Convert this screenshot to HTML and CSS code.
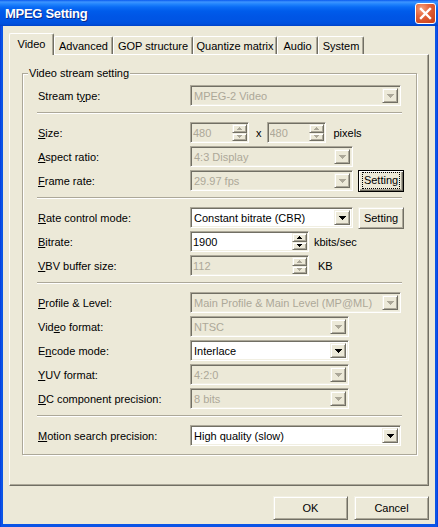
FILE: index.html
```html
<!DOCTYPE html>
<html>
<head>
<meta charset="utf-8">
<link rel="stylesheet" href="styles.css">
</head>
<body>
<div class="window">
  <div class="titlebar">
    <span class="title">MPEG Setting</span>
    <span class="close"><svg width="13" height="13" viewBox="0 0 13 13"><path d="M2 2L11 11M11 2L2 11" stroke="#fff" stroke-width="2.4" stroke-linecap="square"/></svg></span>
  </div>
  <div class="client">
    <div class="tabs">
      <div class="tab sel t1">Video</div>
      <div class="tab t2">Advanced</div>
      <div class="tab t3">GOP structure</div>
      <div class="tab t4">Quantize matrix</div>
      <div class="tab t5">Audio</div>
      <div class="tab t6">System</div>
    </div>
    <div class="panel">
      <fieldset class="group">
        <legend>Video stream setting</legend>
        <div class="rows">
          <div class="row"><span class="lbl">Stream t<u>y</u>pe:</span>
            <div class="combo dis w211"><span class="val">MPEG-2 Video</span><span class="drop"><svg width="7" height="4" viewBox="0 0 7 4"><path d="M0 0h7v1H0zM1 1h5v1H1zM2 2h3v1H2zM3 3h1v1H3z"/></svg></span></div>
          </div>
          <div class="sep"></div>
          <div class="row"><span class="lbl"><u>S</u>ize:</span>
            <div class="edit dis w59"><span class="val">480</span><span class="spin"><span class="sb"><svg width="5" height="3" viewBox="0 0 5 3"><path d="M2 0h1v1H2zM1 1h3v1H1zM0 2h5v1H0z"/></svg></span><span class="sb"><svg width="5" height="3" viewBox="0 0 5 3"><path d="M0 0h5v1H0zM1 1h3v1H1zM2 2h1v1H2z"/></svg></span></span></div>
            <span class="x">x</span>
            <div class="edit dis w59"><span class="val">480</span><span class="spin"><span class="sb"><svg width="5" height="3" viewBox="0 0 5 3"><path d="M2 0h1v1H2zM1 1h3v1H1zM0 2h5v1H0z"/></svg></span><span class="sb"><svg width="5" height="3" viewBox="0 0 5 3"><path d="M0 0h5v1H0zM1 1h3v1H1zM2 2h1v1H2z"/></svg></span></span></div>
            <span class="unit pix">pixels</span>
          </div>
          <div class="row"><span class="lbl"><u>A</u>spect ratio:</span>
            <div class="combo dis w163"><span class="val">4:3 Display</span><span class="drop"><svg width="7" height="4" viewBox="0 0 7 4"><path d="M0 0h7v1H0zM1 1h5v1H1zM2 2h3v1H2zM3 3h1v1H3z"/></svg></span></div>
          </div>
          <div class="row"><span class="lbl"><u>F</u>rame rate:</span>
            <div class="combo dis w163"><span class="val">29.97 fps</span><span class="drop"><svg width="7" height="4" viewBox="0 0 7 4"><path d="M0 0h7v1H0zM1 1h5v1H1zM2 2h3v1H2zM3 3h1v1H3z"/></svg></span></div>
            <button class="btn set focus"><span class="fr">Setting</span></button>
          </div>
          <div class="sep"></div>
          <div class="row"><span class="lbl"><u>R</u>ate control mode:</span>
            <div class="combo w163"><span class="val">Constant bitrate (CBR)</span><span class="drop"><svg width="7" height="4" viewBox="0 0 7 4"><path d="M0 0h7v1H0zM1 1h5v1H1zM2 2h3v1H2zM3 3h1v1H3z"/></svg></span></div>
            <button class="btn set">Setting</button>
          </div>
          <div class="row"><span class="lbl"><u>B</u>itrate:</span>
            <div class="edit w119"><span class="val">1900</span><span class="spin"><span class="sb"><svg width="5" height="3" viewBox="0 0 5 3"><path d="M2 0h1v1H2zM1 1h3v1H1zM0 2h5v1H0z"/></svg></span><span class="sb"><svg width="5" height="3" viewBox="0 0 5 3"><path d="M0 0h5v1H0zM1 1h3v1H1zM2 2h1v1H2z"/></svg></span></span></div>
            <span class="unit kb1">kbits/sec</span>
          </div>
          <div class="row"><span class="lbl"><u>V</u>BV buffer size:</span>
            <div class="edit dis w119"><span class="val">112</span><span class="spin"><span class="sb"><svg width="5" height="3" viewBox="0 0 5 3"><path d="M2 0h1v1H2zM1 1h3v1H1zM0 2h5v1H0z"/></svg></span><span class="sb"><svg width="5" height="3" viewBox="0 0 5 3"><path d="M0 0h5v1H0zM1 1h3v1H1zM2 2h1v1H2z"/></svg></span></span></div>
            <span class="unit kb2">KB</span>
          </div>
          <div class="sep"></div>
          <div class="row"><span class="lbl"><u>P</u>rofile &amp; Level:</span>
            <div class="combo dis w211"><span class="val">Main Profile &amp; Main Level (MP@ML)</span><span class="drop"><svg width="7" height="4" viewBox="0 0 7 4"><path d="M0 0h7v1H0zM1 1h5v1H1zM2 2h3v1H2zM3 3h1v1H3z"/></svg></span></div>
          </div>
          <div class="row"><span class="lbl">Vid<u>e</u>o format:</span>
            <div class="combo dis w159"><span class="val">NTSC</span><span class="drop"><svg width="7" height="4" viewBox="0 0 7 4"><path d="M0 0h7v1H0zM1 1h5v1H1zM2 2h3v1H2zM3 3h1v1H3z"/></svg></span></div>
          </div>
          <div class="row"><span class="lbl">E<u>n</u>code mode:</span>
            <div class="combo w159"><span class="val">Interlace</span><span class="drop"><svg width="7" height="4" viewBox="0 0 7 4"><path d="M0 0h7v1H0zM1 1h5v1H1zM2 2h3v1H2zM3 3h1v1H3z"/></svg></span></div>
          </div>
          <div class="row"><span class="lbl"><u>Y</u>UV format:</span>
            <div class="combo dis w159"><span class="val">4:2:0</span><span class="drop"><svg width="7" height="4" viewBox="0 0 7 4"><path d="M0 0h7v1H0zM1 1h5v1H1zM2 2h3v1H2zM3 3h1v1H3z"/></svg></span></div>
          </div>
          <div class="row"><span class="lbl"><u>D</u>C component precision:</span>
            <div class="combo dis w159"><span class="val">8 bits</span><span class="drop"><svg width="7" height="4" viewBox="0 0 7 4"><path d="M0 0h7v1H0zM1 1h5v1H1zM2 2h3v1H2zM3 3h1v1H3z"/></svg></span></div>
          </div>
          <div class="sep"></div>
          <div class="row"><span class="lbl"><u>M</u>otion search precision:</span>
            <div class="combo w211"><span class="val">High quality (slow)</span><span class="drop"><svg width="7" height="4" viewBox="0 0 7 4"><path d="M0 0h7v1H0zM1 1h5v1H1zM2 2h3v1H2zM3 3h1v1H3z"/></svg></span></div>
          </div>
        </div>
      </fieldset>
    </div>
    <div class="buttons">
      <button class="btn dlg">OK</button>
      <button class="btn dlg">Cancel</button>
    </div>
  </div>
</div>
</body>
</html>
```
FILE: styles.css
```css
* { box-sizing: border-box; }
html, body { margin: 0; padding: 0; }
body {
  width: 438px;
  height: 527px;
  overflow: hidden;
  font-family: "Liberation Sans", Arial, sans-serif;
  font-size: 11px;
  color: #000;
  background: #ffffff;
}
.window {
  width: 438px;
  height: 527px;
  display: flex;
  flex-direction: column;
  background: linear-gradient(to right, #0831D9 0, #0A54E6 1px, #0A54E6 437px, #0831D9 438px);
}
.titlebar {
  height: 26px;
  flex: none;
  display: flex;
  align-items: center;
  justify-content: space-between;
  padding: 0 2px 1px 5px;
  background: linear-gradient(to bottom, #0A5AEE 0px, #3D95FF 2px, #2285FD 4px, #0A6CF5 7px, #005CEB 11px, #0056E6 16px, #0054E3 21px, #0050DD 24px, #0042C8 26px);
  color: #fff;
}
.title {
  font-weight: bold;
  font-size: 13px;
  letter-spacing: -0.3px;
  text-shadow: 1px 1px 0 #0A2A8A;
  margin-top: 1px;
}
.close {
  width: 21px;
  height: 21px;
  border: 1px solid #fff;
  border-radius: 3px;
  background: radial-gradient(circle at 30% 25%, #F4A07E 0, #E4633A 40%, #CC451D 85%);
  display: flex;
  align-items: center;
  justify-content: center;
  margin-top: 1px;
}
.client {
  flex: 1;
  margin: 0 3px 3px 3px;
  background: #ECE9D8;
  padding: 7px 6px 0 6px;
  display: flex;
  flex-direction: column;
}
.tabs {
  height: 21px;
  flex: none;
  display: flex;
  align-items: flex-end;
  position: relative;
  z-index: 1;
}
.tab {
  height: 18px;
  border-top: 1px solid #fff;
  border-left: 1px solid #fff;
  border-right: 1px solid #716F64;
  border-radius: 2px 2px 0 0;
  box-shadow: inset -1px 0 0 #ACA899;
  background: #ECE9D8;
  display: flex;
  align-items: center;
  justify-content: center;
  padding-top: 1px;
  white-space: nowrap;
}
.tab.sel {
  height: 22px;
  margin-bottom: -1px;
  padding-bottom: 2px;
}
.t1 { width: 45px; }
.t2 { width: 59px; }
.t3 { width: 80px; }
.t4 { width: 84px; }
.t5 { width: 41px; }
.t6 { width: 46px; }
.panel {
  height: 432px;
  flex: none;
  border: 1px solid;
  border-color: #fff #716F64 #716F64 #fff;
  box-shadow: inset -1px -1px 0 #ACA899;
  padding: 12px 11px 0 12px;
}
.group {
  margin: 0;
  width: 395px;
  height: 388px;
  border: 1px solid #ACA899;
  box-shadow: inset 1px 1px 0 #fff, 1px 1px 0 #fff;
  padding: 5px 0 0 15px;
  min-width: 0;
}
.group legend {
  padding: 0 1px;
  margin-left: -10px;
  line-height: 13px;
  height: 13px;
  background: #ECE9D8;
}
.rows {
  display: flex;
  flex-direction: column;
  gap: 3px;
}
.row {
  height: 21px;
  display: flex;
  align-items: center;
}
.lbl {
  width: 152px;
  flex: none;
  white-space: nowrap;
}
.sep {
  width: 365px;
  height: 2px;
  margin: 3px 0 5px -1px;
  border-top: 1px solid #ACA899;
  border-bottom: 1px solid #fff;
}
.combo, .edit {
  height: 21px;
  flex: none;
  border: 1px solid;
  border-color: #ACA899 #fff #fff #ACA899;
  box-shadow: inset 1px 1px 0 #716F64, inset -1px -1px 0 #F1EFE2;
  background: #fff;
  padding: 2px 2px 2px 2px;
  display: flex;
  align-items: stretch;
}
.combo.dis, .edit.dis { background: #ECE9D8; color: #ACA899; }
.val {
  flex: 1;
  display: flex;
  align-items: center;
  padding-left: 1px;
  white-space: nowrap;
  overflow: hidden;
}
.edit .val { padding-left: 0; }
.w211 { width: 211px; }
.w163 { width: 163px; }
.w159 { width: 159px; }
.w119 { width: 119px; }
.w59 { width: 59px; }
.drop {
  width: 16px;
  flex: none;
  background: #ECE9D8;
  border: 1px solid;
  border-color: #F1EFE2 #716F64 #716F64 #F1EFE2;
  box-shadow: inset 1px 1px 0 #fff, inset -1px -1px 0 #ACA899;
  display: flex;
  align-items: center;
  justify-content: center;
  padding-top: 1px;
}
.drop svg, .sb svg { fill: #000; }
.dis .drop svg, .dis .sb svg { fill: #ACA899; }
.spin {
  width: 15px;
  flex: none;
  display: flex;
  flex-direction: column;
  margin: -1px -1px -1px 0;
}
.sb {
  flex: 1;
  background: #ECE9D8;
  border: 1px solid;
  border-color: #F1EFE2 #716F64 #716F64 #F1EFE2;
  box-shadow: inset 1px 1px 0 #fff, inset -1px -1px 0 #ACA899;
  display: flex;
  align-items: center;
  justify-content: center;
}
.x { margin: 0 5px 0 7px; }
.unit.pix { margin-left: 8px; }
.unit.kb1 { margin-left: 5px; }
.unit.kb2 { margin-left: 9px; }
.btn {
  font-family: "Liberation Sans", Arial, sans-serif;
  font-size: 11px;
  color: #000;
  background: #ECE9D8;
  border: 1px solid;
  border-color: #F1EFE2 #716F64 #716F64 #F1EFE2;
  box-shadow: inset 1px 1px 0 #fff, inset -1px -1px 0 #ACA899;
  padding: 0;
  margin: 0;
  display: flex;
  align-items: center;
  justify-content: center;
}
.btn.set {
  width: 46px;
  height: 22px;
  margin-left: 5px;
}
.btn.focus {
  border: 1px solid #000;
  box-shadow: inset 1px 1px 0 #fff, inset -1px -1px 0 #716F64, inset -2px -2px 0 #ACA899;
}
.fr {
  border: 1px dotted #000;
  padding: 1px 1px 2px 1px;
  line-height: 12px;
}
.buttons {
  display: flex;
  justify-content: flex-end;
  gap: 6px;
  margin-top: 10px;
}
.btn.dlg {
  width: 75px;
  height: 24px;
}
```
